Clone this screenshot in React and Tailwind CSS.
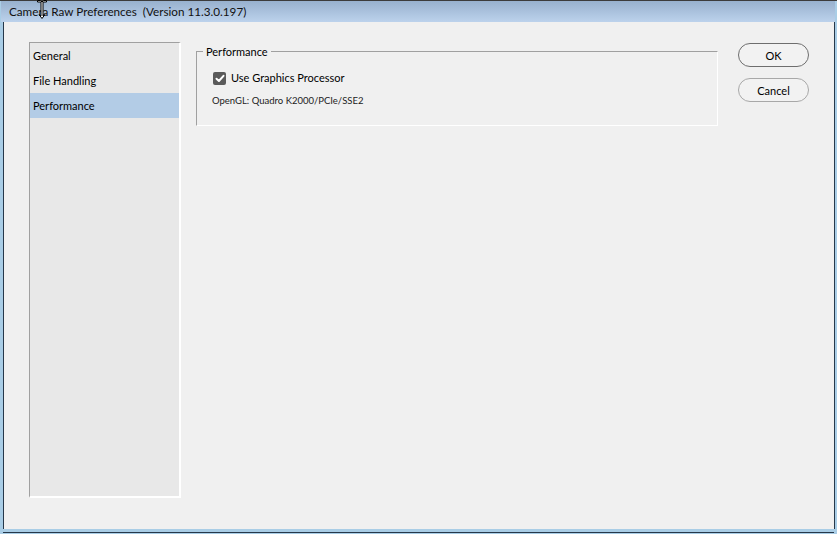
import React from 'react'

const font = { fontFamily: 'Lato, "Liberation Sans", sans-serif' }

function Cursor() {
  return (
    <svg className="absolute left-[35px] top-[-2px]" width="12" height="21" viewBox="0 0 12 21">
      <path
        d="M1.5 1.5 H4.5 L6 3 L7.5 1.5 H10.5 V3 H7 V17 L9 15.5 L6 19.5 L3 15.5 L5 17 V3 H1.5 Z"
        fill="#fff"
        stroke="#000"
        strokeWidth="1"
        strokeLinejoin="round"
      />
    </svg>
  )
}

function CheckBox() {
  return (
    <span className="w-[13px] h-[13px] rounded-[2px] bg-[#5a5a5a] flex items-center justify-center shrink-0">
      <svg width="10" height="9" viewBox="0 0 10 9">
        <path d="M1.5 4.8 L3.9 7 L8.5 1.8" fill="none" stroke="#fff" strokeWidth="2" strokeLinecap="round" strokeLinejoin="round" />
      </svg>
    </span>
  )
}

export default function App() {
  const items = ['General', 'File Handling', 'Performance']
  return (
    <div className="w-[837px] h-[534px] flex flex-col bg-[#a9cde6] border-t border-t-[#3c3c3c] text-black" style={font}>
      <div className="relative h-[21px] flex items-center pl-[8px] pt-[1px] ml-[1px] mr-[2px] bg-gradient-to-b from-[#98b1ce] to-[#bcd2ec] text-[11.7px] text-[#111]">
        <span>Camera Raw Preferences&nbsp; (Version 11.3.0.197)</span>
        <Cursor />
      </div>
      <div className="flex-1 flex ml-[3px] mr-[2px] mb-[3px] border-l border-l-[#26384a] border-r border-r-[#26384a] bg-[#f0f0f0]">
        <div className="flex-1 flex items-start pl-[25px] pt-[20px] pb-[31px] h-full">
          <div className="w-[152px] h-full bg-[#e8e8e8] border-l border-t border-l-[#a0a0a0] border-t-[#a0a0a0] border-r-2 border-b-2 border-r-white border-b-white">
            {items.map((it) => (
              <div
                key={it}
                className={`h-[25px] flex items-center pl-[3px] pt-[2px] text-[11px] ${it === 'Performance' ? 'bg-[#b3cce6]' : ''}`}
              >
                {it}
              </div>
            ))}
          </div>
          <fieldset className="ml-[15px] w-[522px] h-[83px] mt-[1px] border-l border-t border-l-[#a0a0a0] border-t-[#a0a0a0] border-r border-b border-r-white border-b-white pl-[16px]">
            <legend className="-ml-[10px] px-[3px] text-[11px] leading-[17px]">Performance</legend>
            <div className="flex items-center gap-[5px] mt-[10px] text-[11px] leading-[16px]">
              <CheckBox />
              <span>Use Graphics Processor</span>
            </div>
            <div className="mt-[9px] -ml-[1px] text-[9.5px] leading-[12px] text-[#222]">
              OpenGL: Quadro K2000/PCIe/SSE2
            </div>
          </fieldset>
          <div className="ml-[20px] mt-[1px] flex flex-col gap-[11px]">
            <button className="w-[71px] h-[24px] pt-[1px] rounded-full border border-[#6e6e6e] bg-[#f2f2f2] text-[11px] leading-none">OK</button>
            <button className="w-[71px] h-[24px] pt-[1px] rounded-full border border-[#a8a8a8] bg-[#f2f2f2] text-[11px] leading-none">Cancel</button>
          </div>
        </div>
      </div>
      <div className="h-[1px] mx-[3px] bg-[#26384a]" />
      <div className="h-[1px] bg-[#a9cde6]" />
    </div>
  )
}
